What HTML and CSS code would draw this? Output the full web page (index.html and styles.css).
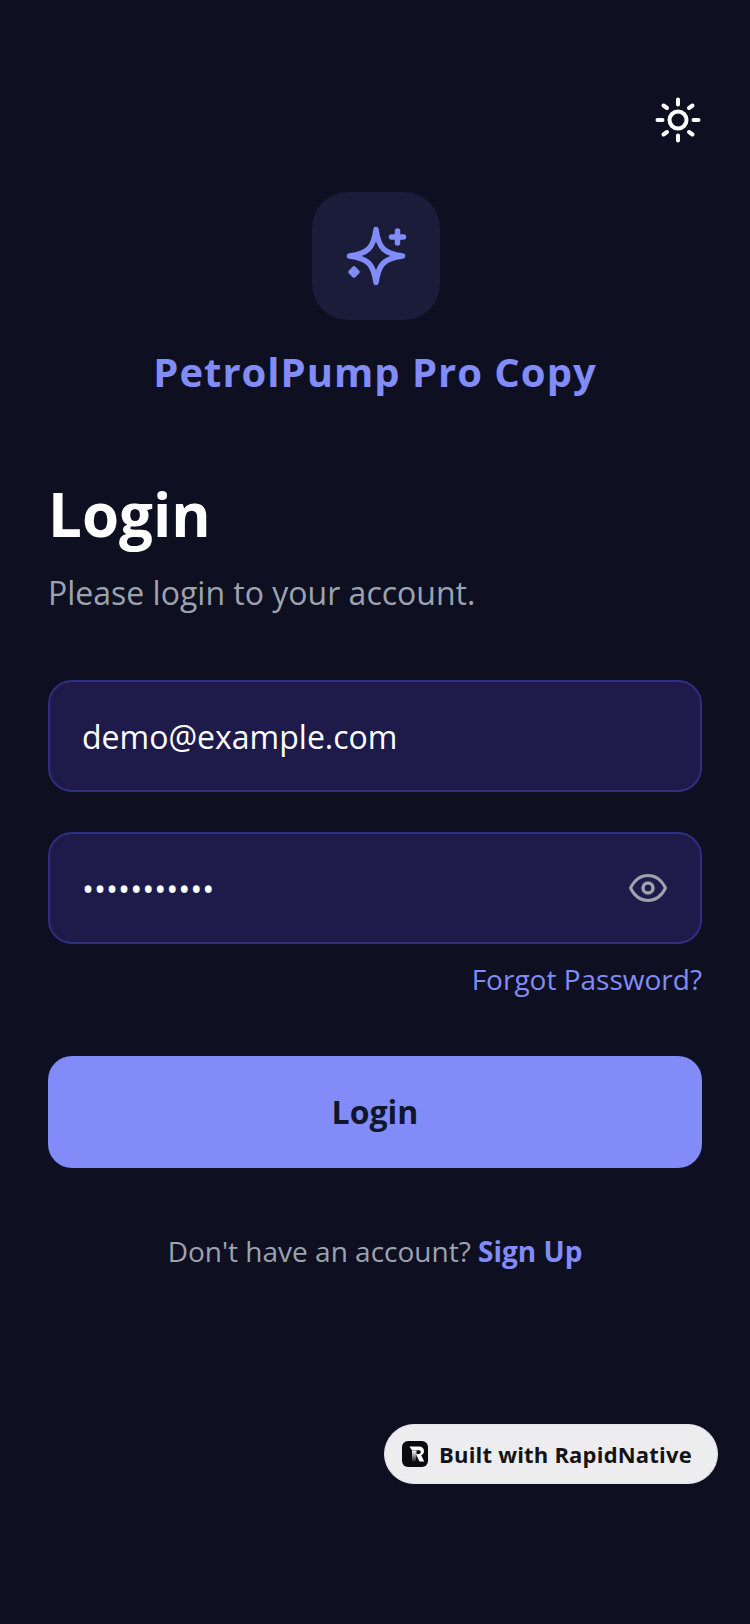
FILE: index.html
```html
<!DOCTYPE html>
<html lang="en">
<head>
    <meta charset="UTF-8">
    <meta name="viewport" content="width=device-width, initial-scale=1.0">
    <title>PetrolPump Pro Copy</title>
    <link rel="stylesheet" href="styles.css">
</head>
<body>
    <div class="screen">
        <div class="top-bar">
            <svg width="48" height="48" viewBox="0 0 48 48" fill="none" stroke="#ffffff" stroke-width="4" stroke-linecap="round">
                <circle cx="24" cy="24" r="8.500"/>
                <path d="M24 3.500v5M24 39.500v5M3.500 24h5M39.500 24h5M9.500 9.500l3.500 2.500M35 36l3.500 2.500M9.500 38.500l3.500-2.500M35 12l3.500-2.500"/>
            </svg>
        </div>

        <div class="brand">
            <div class="logo">
                <svg width="64" height="64" viewBox="0 0 64 64" fill="none" stroke="#818cf8" stroke-width="5.500" stroke-linecap="round" stroke-linejoin="round">
                    <path d="M32 5.500C34.500 24 40 29.500 58.500 32C40 34.500 34.500 40 32 58.500C29.500 40 24 34.500 5.500 32C24 29.500 29.500 24 32 5.500Z"/>
                    <path d="M53.500 7v12M47.500 13h12" stroke-width="5.500"/>
                    <path d="M10 44.500l3.500 3.500-3.500 3.500L6.500 48Z" fill="#818cf8" stroke-width="4.500"/>
                </svg>
            </div>
            <div class="brand-name">PetrolPump Pro Copy</div>
        </div>

        <h1 class="title">Login</h1>
        <p class="subtitle">Please login to your account.</p>

        <div class="field">demo@example.com</div>
        <div class="field field-password">
            <span>•••••••••••</span>
            <svg width="40" height="40" viewBox="0 0 40 40" fill="none" stroke="#9ca3af" stroke-width="3" stroke-linejoin="round">
                <path d="M2.500 20C7 11 13 7.500 20 7.500S33 11 37.500 20C33 29 27 32.500 20 32.500S7 29 2.500 20Z"/>
                <circle cx="20" cy="20" r="5" stroke-width="3.500"/>
            </svg>
        </div>
        <a class="forgot">Forgot Password?</a>

        <button class="login-button">Login</button>

        <p class="signup">Don't have an account? <span class="signup-link">Sign Up</span></p>

        <div class="built-badge">
            <svg width="26" height="26" viewBox="0 0 26 26">
                <defs>
                    <linearGradient id="stemFade" x1="0" y1="0" x2="0" y2="1">
                        <stop offset="0" stop-color="#ffffff"/>
                        <stop offset="1" stop-color="#222222"/>
                    </linearGradient>
                </defs>
                <rect width="26" height="26" rx="6" fill="#0b0b0d"/>
                <path d="M7.500 5.500H17c3 0 5 1.800 5 4.500 0 2-1 3.500-2.800 4.200l3 6.300h-4.700l-3.600-7.500h3c1.200 0 1.900-.9 1.900-2s-.7-1.800-1.900-1.800H10Z" fill="#ffffff"/>
                <path d="M10 9.500h4.500v5l-1 6H10Z" fill="url(#stemFade)"/>
            </svg>
            <span>Built with RapidNative</span>
        </div>
    </div>
</body>
</html>
```

FILE: styles.css
```css
* {
    box-sizing: border-box;
}
body {
    margin: 0;
    background-color: #0e1022;
    font-family: 'Open Sans', sans-serif;
    color: #ffffff;
}
.screen {
    position: relative;
    height: 1624px;
    padding: 96px 48px 0;
    display: flex;
    flex-direction: column;
}
.top-bar {
    display: flex;
    justify-content: flex-end;
}
.brand {
    display: flex;
    flex-direction: column;
    align-items: center;
    margin-top: 48px;
}
.logo {
    width: 128px;
    height: 128px;
    margin-left: 2px;
    border-radius: 36px;
    background-color: #1b1c3a;
    display: flex;
    align-items: center;
    justify-content: center;
}
.brand-name {
    margin-top: 24px;
    font-size: 40px;
    line-height: 56px;
    font-weight: 700;
    letter-spacing: 1px;
    color: #818cf8;
}
.title {
    margin: 74px 0 0;
    font-size: 60px;
    line-height: 80px;
    font-weight: 700;
}
.subtitle {
    margin: 15px 0 0;
    font-size: 32px;
    line-height: 48px;
    color: #9ca3af;
}
.field {
    height: 112px;
    margin-top: 40px;
    padding: 0 32px;
    border: 2px solid #312e81;
    border-radius: 24px;
    background-color: #1e1b4b;
    display: flex;
    align-items: center;
    font-size: 32px;
}
.subtitle + .field {
    margin-top: 63px;
}
.field-password {
    justify-content: space-between;
}
.forgot {
    align-self: flex-end;
    margin-top: 15px;
    font-size: 28px;
    line-height: 40px;
    color: #818cf8;
}
.login-button {
    height: 112px;
    margin-top: 57px;
    padding-bottom: 2px;
    border: none;
    border-radius: 24px;
    background-color: #818cf8;
    font-family: inherit;
    font-size: 32px;
    font-weight: 700;
    color: #0f172a;
}
.signup {
    margin: 63px 0 0;
    text-align: center;
    font-size: 28px;
    line-height: 40px;
    color: #9ca3af;
}
.signup-link {
    font-weight: 700;
    color: #818cf8;
}
.built-badge {
    position: absolute;
    left: 384px;
    top: 1424px;
    width: 334px;
    height: 60px;
    padding: 0 0 1px 17px;
    border-radius: 30px;
    border: 1px solid #e2e2ea;
    background-color: #ededf0;
    display: flex;
    align-items: center;
    gap: 11px;
    font-size: 22px;
    letter-spacing: 0.2px;
    font-weight: 700;
    color: #141416;
}
```
